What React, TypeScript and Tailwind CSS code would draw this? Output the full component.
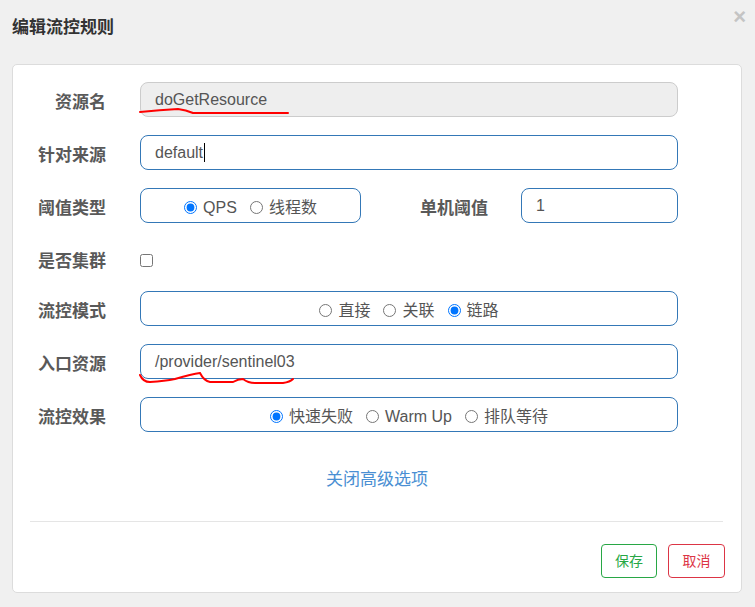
import { ReactNode } from "react"

const font = { fontFamily: '"Liberation Sans", "Noto Sans CJK SC", sans-serif' }

function Label({ children, className = "w-[93px]" }: { children: ReactNode; className?: string }) {
  return (
    <div className={`${className} shrink-0 pt-[3px] text-right text-[17px] font-bold text-[#595959] leading-[35px]`}>
      {children}
    </div>
  )
}

function Radio({ name, label, checked }: { name: string; label: string; checked?: boolean }) {
  return (
    <label className="flex items-center gap-[6px] text-[16px] text-[#555]">
      <input type="radio" name={name} defaultChecked={checked} className="m-0 w-[13px] h-[13px]" />
      <span>{label}</span>
    </label>
  )
}

function RadioBox({ className, children }: { className: string; children: ReactNode }) {
  return (
    <div className={`${className} h-[35px] border border-[#3478b7] rounded-lg flex items-center justify-center gap-[13px] pt-[4px]`}>
      {children}
    </div>
  )
}

export default function App() {
  return (
    <div className="min-h-screen bg-[#f0f0f0]" style={font}>
      <div className="flex items-start justify-between pt-[7px] pl-[12px] pr-[9px] h-[64px]">
        <h4 className="mt-[9px] text-[17px] leading-[24px] font-bold text-[#333]">编辑流控规则</h4>
        <span className="text-[22px] leading-[20px] font-bold text-[#c4c4c4]">×</span>
      </div>

      <div className="ml-[12px] w-[730px] bg-white border border-[#dcdcdc] rounded-[5px] pt-[17px] pb-[14px]">
        <div className="flex flex-col gap-[18px]">
          <div className="flex gap-[34px] h-[35px]">
            <Label>资源名</Label>
            <div className="relative w-[538px] h-[35px] bg-[#eee] border border-[#ccc] rounded-lg px-[14px] flex items-center text-[16px] text-[#555]">
              doGetResource
              <svg className="absolute left-[-1px] top-[-1px] overflow-visible" width="160" height="40" fill="none">
                <path d="M0 30 Q20 28 38 27 Q46 28 53 31 L148 31" stroke="#f00" strokeWidth="2" strokeLinecap="round" />
              </svg>
            </div>
          </div>

          <div className="flex gap-[34px] h-[35px]">
            <Label>针对来源</Label>
            <div className="w-[538px] h-[35px] border border-[#3478b7] rounded-lg px-[14px] flex items-center text-[16px] text-[#555]">
              default
              <span className="inline-block w-px h-[19px] bg-black ml-px" />
            </div>
          </div>

          <div className="flex h-[35px]">
            <Label>阈值类型</Label>
            <RadioBox className="ml-[34px] w-[221px]">
              <Radio name="grade" label="QPS" checked />
              <Radio name="grade" label="线程数" />
            </RadioBox>
            <Label className="w-[127px]">单机阈值</Label>
            <div className="ml-[33px] w-[157px] h-[35px] border border-[#3478b7] rounded-lg px-[14px] flex items-center text-[16px] text-[#555]">
              1
            </div>
          </div>

          <div className="flex gap-[34px] h-[32px] items-start">
            <Label>是否集群</Label>
            <input type="checkbox" className="m-0 mt-[13px] w-[13px] h-[13px]" />
          </div>

          <div className="flex gap-[34px] h-[35px]">
            <Label>流控模式</Label>
            <RadioBox className="w-[538px]">
              <Radio name="strategy" label="直接" />
              <Radio name="strategy" label="关联" />
              <Radio name="strategy" label="链路" checked />
            </RadioBox>
          </div>

          <div className="flex gap-[34px] h-[35px]">
            <Label>入口资源</Label>
            <div className="relative w-[538px] h-[35px] border border-[#3478b7] rounded-lg px-[14px] flex items-center text-[16px] text-[#555]">
              /provider/sentinel03
              <svg className="absolute left-[-1px] top-[-1px] overflow-visible" width="160" height="44" fill="none">
                <path
                  d="M0 31 Q3 38 10 38 Q25 37 35 35 Q52 30 60 29 Q64 37 70 38 L93 38 Q98 35 103 35 Q108 39 115 39 L143 39 Q150 38 153 35"
                  stroke="#f00"
                  strokeWidth="2"
                  strokeLinecap="round"
                />
              </svg>
            </div>
          </div>

          <div className="flex gap-[34px] h-[35px]">
            <Label>流控效果</Label>
            <RadioBox className="w-[538px]">
              <Radio name="behavior" label="快速失败" checked />
              <Radio name="behavior" label="Warm Up" />
              <Radio name="behavior" label="排队等待" />
            </RadioBox>
          </div>
        </div>

        <div className="mt-[36px] h-[24px] leading-[24px] text-center text-[17px] text-[#4a8fd3]">关闭高级选项</div>

        <div className="mt-[29px] ml-[17px] mr-[18px] border-t border-[#e5e5e5]" />

        <div className="mt-[22px] flex justify-end gap-[11px] pr-[16px]">
          <button className="w-[56px] h-[34px] rounded border border-[#28a745] text-[#28a745] text-[14px]">保存</button>
          <button className="w-[57px] h-[34px] rounded border border-[#dc3545] text-[#dc3545] text-[14px]">取消</button>
        </div>
      </div>
    </div>
  )
}
